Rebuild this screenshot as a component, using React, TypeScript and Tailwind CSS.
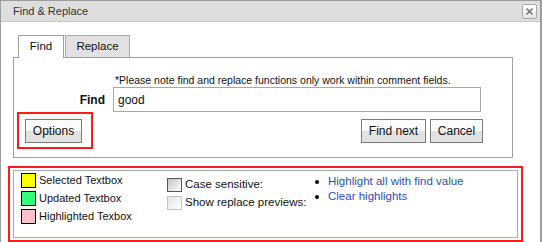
import React from 'react';

const swatches = [
  { color: 'bg-[#ffff00]', label: 'Selected Textbox' },
  { color: 'bg-[#33ff7a]', label: 'Updated Textbox' },
  { color: 'bg-[#ffc0cb]', label: 'Highlighted Texbox' },
];

function Button({ label, width }: { label: string; width: string }) {
  return (
    <button
      className={`${width} h-[24px] border border-[#7a7a7a] bg-linear-to-b from-[#fbfbfb] from-50% to-[#e2e2e2] to-50% text-[12px] leading-none text-[#111] flex items-center justify-center`}
    >
      {label}
    </button>
  );
}

export default function App() {
  return (
    <div className="w-[542px] h-[242px] overflow-hidden bg-white font-['Liberation_Sans',Arial,sans-serif] text-[11px] text-[#111]">
      <div className="w-[542px] h-[250px] border-l border-t border-r-2 border-[#9c9c9c] flex flex-col">
        {/* title bar */}
        <div className="h-[21px] bg-[#dedede] border-b border-[#c6c6c6] flex items-center justify-between pl-[12px] pr-[3px]">
          <span className="text-[11px] text-[#333] leading-none">Find &amp; Replace</span>
          <div className="w-[15px] h-[15px] mt-[1px] border border-[#a8a8a8] rounded-[2px] bg-linear-to-b from-white to-[#e6e6e6] flex items-center justify-center">
            <svg width="7" height="7" viewBox="0 0 7 7">
              <path d="M0.5 0.5 L6.5 6.5 M6.5 0.5 L0.5 6.5" stroke="#6a6a6a" strokeWidth="1.4" />
            </svg>
          </div>
        </div>

        <div className="pl-[7px] pt-[12px] flex flex-col">
          {/* tabs */}
          <div className="ml-[5px] pl-[5px] flex items-end gap-[1px] h-[23px]">
            <div className="w-[46px] h-[23px] bg-white border border-b-0 border-[#a0a0a0] relative top-[1px] flex items-center justify-center text-[11.5px]">
              Find
            </div>
            <div className="w-[65px] h-[22px] border border-b-0 border-[#a8a8a8] bg-[repeating-conic-gradient(#d6d6d6_0_25%,#ececec_0_50%)] bg-size-[2px_2px] flex items-center justify-center text-[11.5px]">
              Replace
            </div>
          </div>

          {/* panel */}
          <div className="ml-[5px] w-[500px] h-[101px] border border-[#a0a0a0] flex flex-col">
            <div className="pl-[101px] pt-[16px] leading-[13px] text-[10.5px]">
              *Please note find and replace functions only work within comment fields.
            </div>
            <div className="flex items-center">
              <div className="w-[99px] pr-[8px] text-right font-bold text-[12px]">Find</div>
              <div className="w-[368px] h-[25px] border border-[#a8a8a8] flex items-center pl-[4px] text-[12px]">
                good
              </div>
            </div>
            <div className="flex justify-between items-start">
              <div className="ml-[3px] w-[76px] h-[37px] border-2 border-[#ff1a1a] pl-[6px] pt-[5px]">
                <Button label="Options" width="w-[57px]" />
              </div>
              <div className="flex gap-[4px] mt-[7px] mr-[29px]">
                <Button label="Find next" width="w-[65px]" />
                <Button label="Cancel" width="w-[53px]" />
              </div>
            </div>
          </div>

          {/* options */}
          <div className="mt-[8px] w-[515px] h-[76px] border-2 border-[#ff1a1a] p-[3px] pt-[2px]">
            <div className="h-[68px] border border-[#a8a8a8] flex pl-[7px] pt-[2px]">
              <div className="w-[146px] flex flex-col gap-[3px]">
                {swatches.map((s) => (
                  <div key={s.label} className="flex items-center gap-[3px] h-[15px]">
                    <div className={`w-[15px] h-[15px] border border-black ${s.color}`} />
                    <span className="text-[11px]">{s.label}</span>
                  </div>
                ))}
              </div>
              <div className="w-[148px] flex flex-col gap-[4px] pt-[5px]">
                <div className="flex items-center gap-[3px] h-[14px]">
                  <div className="w-[15px] h-[14px] border border-[#555] bg-linear-to-br from-[#c4c4c4] to-white" />
                  <span className="text-[11.5px]">Case sensitive:</span>
                </div>
                <div className="flex items-center gap-[3px] h-[14px]">
                  <div className="w-[15px] h-[14px] border border-[#c4c4c4] bg-linear-to-br from-[#e4e4e4] to-white" />
                  <span className="text-[11.5px]">Show replace previews:</span>
                </div>
              </div>
              <div className="flex flex-col gap-[2px] pt-[2px] text-[11.5px] text-[#2d4cbd]">
                <div className="flex items-center h-[13px]">
                  <span className="w-[4px] h-[4px] rounded-full bg-black mr-[9px]" />
                  Highlight all with find value
                </div>
                <div className="flex items-center h-[13px]">
                  <span className="w-[4px] h-[4px] rounded-full bg-black mr-[9px]" />
                  Clear highlights
                </div>
              </div>
            </div>
          </div>
        </div>
      </div>
    </div>
  );
}
